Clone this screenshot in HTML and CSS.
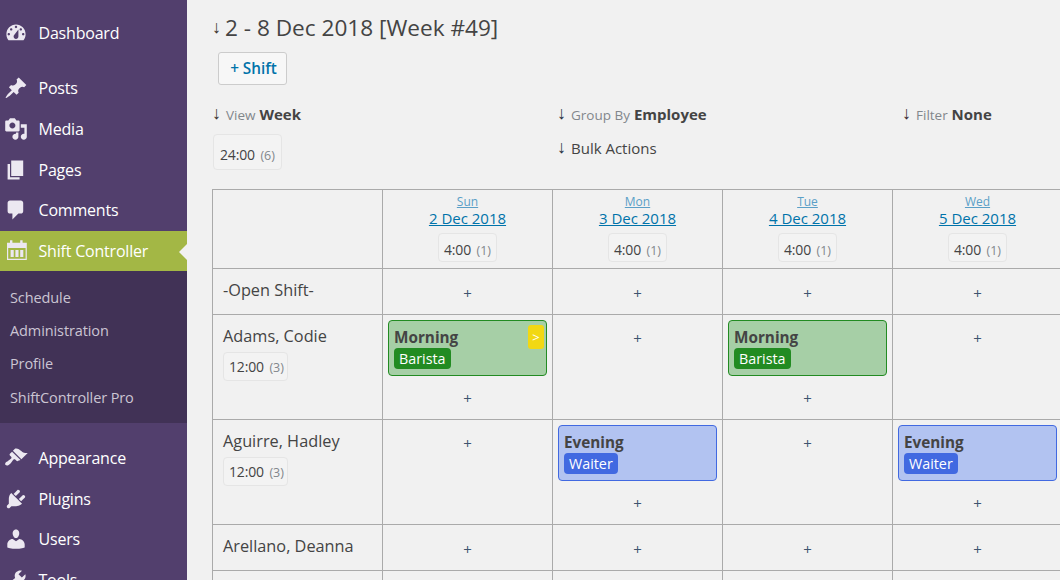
FILE: index.html
```html
<!DOCTYPE html>
<html lang="en">
<head>
<meta charset="utf-8">
<title>Shift Controller</title>
<link rel="stylesheet" href="styles.css">
</head>
<body>
<div class="app">
  <nav class="side">
    <a class="item gap-after"><svg class="ic" viewBox="0 0 20 20"><path fill-rule="evenodd" d="M3.76 16h12.48c1.1-1.37 1.76-3.11 1.76-5 0-4.42-3.58-8-8-8s-8 3.58-8 8c0 1.89.66 3.63 1.76 5zM10 4c.55 0 1 .45 1 1s-.45 1-1 1-1-.45-1-1 .45-1 1-1zM6 6c.55 0 1 .45 1 1s-.45 1-1 1-1-.45-1-1 .45-1 1-1zm8 0c.55 0 1 .45 1 1s-.45 1-1 1-1-.45-1-1 .45-1 1-1zm-5.37 5.55L12 7v6c0 1.1-.9 2-2 2s-2-.9-2-2c0-.57.24-1.08.63-1.45zM4 10c.55 0 1 .45 1 1s-.45 1-1 1-1-.45-1-1 .45-1 1-1zm12 0c.55 0 1 .45 1 1s-.45 1-1 1-1-.45-1-1 .45-1 1-1z"/></svg>Dashboard</a>
    <a class="item"><svg class="ic" viewBox="0 0 20 20"><path d="M10.44 3.02l1.82-1.82 6.36 6.35-1.83 1.82c-1.05-.68-2.48-.57-3.41.36l-.75.75c-.92.93-1.04 2.35-.35 3.41l-1.83 1.82-2.41-2.41-2.8 2.79c-.42.42-3.38 2.71-3.8 2.29s1.86-3.39 2.28-3.81l2.79-2.79L4.1 9.36l1.83-1.82c1.05.69 2.48.57 3.4-.36l.75-.75c.93-.92 1.05-2.35.36-3.41z"/></svg>Posts</a>
    <a class="item"><svg class="ic" viewBox="0 0 20 20"><path fill-rule="evenodd" d="M13 11V4c0-.55-.45-1-1-1h-1.67L9 1H5L3.67 3H2c-.55 0-1 .45-1 1v7c0 .55.45 1 1 1h10c.55 0 1-.45 1-1zM7 4.5c1.38 0 2.5 1.12 2.5 2.5S8.38 9.5 7 9.5 4.5 8.38 4.5 7 5.62 4.5 7 4.5zM14 6h5v10.5c0 1.38-1.12 2.5-2.5 2.5S14 17.88 14 16.5s1.12-2.5 2.5-2.5c.17 0 .34.02.5.05V9h-3V6zm-4 8.05V13h2v3.5c0 1.38-1.12 2.5-2.5 2.5S7 17.88 7 16.5 8.12 14 9.5 14c.17 0 .34.02.5.05z"/></svg>Media</a>
    <a class="item"><svg class="ic" viewBox="0 0 20 20"><path d="M6 15V2h10v13H6zm-1 1h8v2H3V5h2v11z"/></svg>Pages</a>
    <a class="item"><svg class="ic" viewBox="0 0 20 20"><path d="M5 2h9c1.1 0 2 .9 2 2v7c0 1.1-.9 2-2 2h-2l-5 5v-5H5c-1.1 0-2-.9-2-2V4c0-1.1.9-2 2-2z"/></svg>Comments</a>
    <a class="item active"><svg class="ic" viewBox="0 0 20 20"><path fill-rule="evenodd" d="M5 1h2v2.200h6.500V1h2v2.200H19V17.500H2.500V3.200H5V1zM3.500 7.500V16.500h14.500V7.500H3.500zM5.500 9.200h2.600V15H5.500zM9.500 9.200h2.600V15H9.500zM13.500 9.200h2.600V15h-2.600z"/></svg>Shift Controller</a>
    <div class="sub">
      <a class="sub-item">Schedule</a>
      <a class="sub-item">Administration</a>
      <a class="sub-item">Profile</a>
      <a class="sub-item">ShiftController Pro</a>
    </div>
    <a class="item after-sub"><svg class="ic" viewBox="0 0 20 20"><path d="M14.48 11.06L7.41 3.99l1.5-1.5c.5-.56 2.3-.47 3.51.32 1.21.8 1.43 1.28 2.91 2.1 1.18.64 2.45 1.26 4.45.85zm-.71.71L6.7 4.7 4.93 6.47c-.39.39-.39 1.02 0 1.41l1.06 1.06c.39.39.39 1.03 0 1.42-.6.6-1.43 1.11-2.21 1.69-.35.26-.7.53-1.01.84C1.43 13.23.4 14.89 1.41 15.9c1.01 1.01 2.67-.02 4.01-1.36.31-.31.58-.66.84-1.01.58-.78 1.09-1.61 1.69-2.21.39-.39 1.02-.39 1.41 0l1.06 1.06c.39.39 1.02.39 1.41 0z"/></svg>Appearance</a>
    <a class="item"><svg class="ic" viewBox="0 0 20 20"><path d="M13.11 4.36L9.87 7.6 8 5.73l3.24-3.24c.35-.34 1.05-.2 1.56.32.52.51.66 1.21.31 1.55zm-8 1.77l.91-1.12 9.01 9.01-1.19.84c-.71.71-2.63 1.16-3.82 1.16H6.14L4.9 17.26c-.59.59-1.54.59-2.12 0-.59-.58-.59-1.53 0-2.12l1.24-1.24v-3.88c0-1.13.4-3.19 1.09-3.89zm7.26 3.97l3.24-3.24c.34-.35 1.04-.21 1.55.31.52.51.66 1.21.31 1.55l-3.24 3.25z"/></svg>Plugins</a>
    <a class="item"><svg class="ic" viewBox="0 0 20 20"><path d="M10 9.25c-2.27 0-2.73-3.44-2.73-3.44C7 4.02 7.82 2 9.97 2c2.16 0 2.98 2.02 2.71 3.81 0 0-.41 3.44-2.68 3.44zm0 2.57L12.72 10c2.39 0 4.52 2.33 4.52 4.53v2.49s-3.65 1.13-7.24 1.13c-3.65 0-7.24-1.13-7.24-1.13v-2.49c0-2.25 1.94-4.48 4.47-4.48z"/></svg>Users</a>
    <a class="item"><svg class="ic" viewBox="0 0 20 20"><path fill-rule="evenodd" d="M16.68 9.77c-1.34 1.34-3.3 1.67-4.95.99l-5.41 6.52c-.99.99-2.59.99-3.58 0s-.99-2.59 0-3.57l6.52-5.42c-.68-1.65-.35-3.61.99-4.95 1.28-1.28 3.12-1.62 4.72-1.06l-2.89 2.89 2.82 2.82 2.86-2.87c.53 1.58.18 3.39-1.08 4.65zM3.81 16.21c.4.39 1.04.39 1.43 0 .4-.4.4-1.04 0-1.43-.39-.4-1.03-.4-1.43 0-.39.39-.39 1.03 0 1.43z"/></svg>Tools</a>
  </nav>
  <main class="main">
    <h1 class="title"><span class="arr arr-brown">↓</span>2 - 8 Dec 2018 [Week #49]</h1>
    <button class="add">+ Shift</button>
    <div class="filters">
      <div class="filter">
        <div class="f-line"><span class="arr arr-brown">↓</span><span class="muted">View</span> <b>Week</b></div>
        <div class="f-line2"><span class="chip chip-big">24:00 <small>(6)</small></span></div>
      </div>
      <div class="filter">
        <div class="f-line"><span class="arr arr-blue">↓</span><span class="muted">Group By</span> <b>Employee</b></div>
        <div class="f-line bulk"><span class="arr arr-blue">↓</span>Bulk Actions</div>
      </div>
      <div class="filter">
        <div class="f-line"><span class="arr arr-red">↓</span><span class="muted">Filter</span> <b>None</b></div>
      </div>
    </div>
    <table class="sched">
      <tbody>
        <tr class="r-head">
          <td></td>
          <td><a class="dow">Sun</a><a class="date">2 Dec 2018</a><span class="chip">4:00 <small>(1)</small></span></td>
          <td><a class="dow">Mon</a><a class="date">3 Dec 2018</a><span class="chip">4:00 <small>(1)</small></span></td>
          <td><a class="dow">Tue</a><a class="date">4 Dec 2018</a><span class="chip">4:00 <small>(1)</small></span></td>
          <td><a class="dow">Wed</a><a class="date">5 Dec 2018</a><span class="chip">4:00 <small>(1)</small></span></td>
        </tr>
        <tr class="r-short">
          <th>-Open Shift-</th>
          <td><a class="plus">+</a></td><td><a class="plus">+</a></td><td><a class="plus">+</a></td><td><a class="plus">+</a></td>
        </tr>
        <tr class="r-tall">
          <th>Adams, Codie<span class="chip">12:00 <small>(3)</small></span></th>
          <td><div class="shift green"><b>Morning</b><span class="tag">Barista</span><a class="go">&gt;</a></div><a class="plus">+</a></td>
          <td><a class="plus top">+</a></td>
          <td><div class="shift green"><b>Morning</b><span class="tag">Barista</span></div><a class="plus">+</a></td>
          <td><a class="plus top">+</a></td>
        </tr>
        <tr class="r-tall">
          <th>Aguirre, Hadley<span class="chip">12:00 <small>(3)</small></span></th>
          <td><a class="plus top">+</a></td>
          <td><div class="shift blue"><b>Evening</b><span class="tag">Waiter</span></div><a class="plus">+</a></td>
          <td><a class="plus top">+</a></td>
          <td><div class="shift blue"><b>Evening</b><span class="tag">Waiter</span></div><a class="plus">+</a></td>
        </tr>
        <tr class="r-short">
          <th>Arellano, Deanna</th>
          <td><a class="plus">+</a></td><td><a class="plus">+</a></td><td><a class="plus">+</a></td><td><a class="plus">+</a></td>
        </tr>
        <tr class="r-short">
          <th></th><td></td><td></td><td></td><td></td>
        </tr>
      </tbody>
    </table>
  </main>
</div>
</body>
</html>
```

FILE: styles.css
```css
* { box-sizing: border-box; }
html, body { margin: 0; height: 100%; overflow: hidden; }
body { background: #f1f1f1; color: #444; font-family: "Open Sans", "Noto Sans", sans-serif; font-size: 16px; }
.app { display: flex; width: 1060px; height: 580px; overflow: hidden; }

.side { flex: 0 0 187px; background: #523f6d; padding-top: 13px; height: 580px; overflow: hidden; }
.item { display: flex; align-items: center; height: 40.75px; color: #fff; font-size: 16px; position: relative; white-space: nowrap; letter-spacing: -.2px; }
.item.gap-after { margin-bottom: 14px; }
.item.after-sub { margin-top: 14.25px; }
.ic { width: 24px; height: 24px; margin: 0 11px 0 3.5px; fill: #ece8f1; flex: none; }
.item.active { background: #a3b745; height: 40.5px; }
.item.active::after { content: ""; position: absolute; right: 0; top: 13px; border: 8px solid transparent; border-right-color: #f1f1f1; border-left-width: 0; }
.sub { background: #413256; padding: 9.25px 0; }
.sub-item { display: flex; align-items: center; height: 33.4px; padding-left: 10px; font-size: 14.5px; color: #cbc5d3; white-space: nowrap; letter-spacing: -.1px; }

.main { flex: 1 0 auto; width: 873px; padding: 0 0 0 25px; overflow: hidden; }
.title { margin: 13px 0 0 0; font-weight: 400; font-size: 22.6px; line-height: 30px; color: #444; white-space: nowrap; }
.arr { font-family: "Liberation Sans", sans-serif; font-size: 18px; line-height: 1; margin-right: 5px; display: inline-block; width: 9px; text-align: center; vertical-align: 1px; }
.title .arr { margin-right: 4px; vertical-align: 3px; }
.arr-brown { color: #3a352c; }
.arr-blue { color: #26333f; }
.arr-red { color: #3a2a2d; }
.add { display: block; margin: 9px 0 0 6px; width: 69px; height: 33px; padding: 0 0 0 2px; background: #f7f7f7; border: 1px solid #ccc; border-radius: 3px; color: #0073aa; font: 600 15.3px/1 "Open Sans", sans-serif; }
.filters { display: flex; margin-top: 15px; }
.filter { width: 345px; flex: none; }
.f-line { line-height: 28px; height: 28px; font-size: 15px; white-space: nowrap; }
.f-line b { font-weight: 700; }
.bulk { margin-top: 6px; }
.f-line2 { margin-top: 6px; }
.muted { color: #82878c; font-size: 13.5px; }
.chip { display: inline-block; border: 1px solid #e5e5e5; border-radius: 4px; background: #f3f3f3; font-size: 14px; letter-spacing: -.15px; line-height: 21px; padding: 5px 5px 0; font-weight: 400; white-space: nowrap; }
.chip-big { padding: 6px 6px 0; line-height: 27px; margin-left: 1px; }
.chip-big small { margin-left: 3px; }
.chip small { font-size: 12.5px; color: #82878c; margin-left: 2px; letter-spacing: 0; }

.sched { border-collapse: collapse; table-layout: fixed; width: 850px; margin-top: 19px; }
.sched td, .sched th { border: 1px solid #aaa; width: 170px; padding: 0; vertical-align: top; text-align: center; font-weight: 400; }
.sched th { text-align: left; padding: 8px 10px; font-size: 16.3px; line-height: 26px; }
.sched th .chip { display: block; width: 65px; margin-top: 3px; line-height: 21px; padding: 3px 5px 2px; }
.r-head { height: 79px; }
.r-head td { padding-top: 5px; }
.r-short { height: 46px; }
.r-tall { height: 105px; }
.dow { display: block; color: #5a9fc7; font-size: 12px; line-height: 14px; text-decoration: underline; }
.date { display: block; color: #0073aa; font-size: 15px; line-height: 16px; text-decoration: underline; margin: 1px 0 7px; }
.plus { display: block; color: #3e5570; font-size: 15px; line-height: 20px; margin-top: 14px; }
.plus.top { margin-top: 13px; }
.shift { position: relative; margin: 5px 5px 0 5px; height: 56px; border: 1px solid; border-radius: 4px; text-align: left; padding: 7px 5px 0; }
.shift b { display: block; font-size: 15.3px; line-height: 19px; }
.shift + .plus { margin-top: 12px; }
.tag { display: inline-block; color: #fff; font-size: 14.3px; line-height: 21px; padding: 0 5px; border-radius: 4px; }
.green { background: #a6cfa6; border-color: #228b22; }
.green .tag { background: #228b22; }
.blue { background: #b2c3f1; border-color: #4169e1; }
.blue .tag { background: #4169e1; }
.go { position: absolute; top: 4px; right: 2px; width: 16px; height: 24px; background: #f2d813; color: #fff; border-radius: 3px; text-align: center; font-size: 13px; line-height: 24px; }
```
